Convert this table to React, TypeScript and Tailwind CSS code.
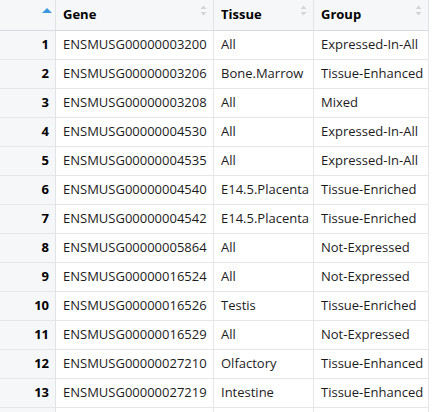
import React from "react";

const rows: [string, string, string][] = [
  ["ENSMUSG00000003200", "All", "Expressed-In-All"],
  ["ENSMUSG00000003206", "Bone.Marrow", "Tissue-Enhanced"],
  ["ENSMUSG00000003208", "All", "Mixed"],
  ["ENSMUSG00000004530", "All", "Expressed-In-All"],
  ["ENSMUSG00000004535", "All", "Expressed-In-All"],
  ["ENSMUSG00000004540", "E14.5.Placenta", "Tissue-Enriched"],
  ["ENSMUSG00000004542", "E14.5.Placenta", "Tissue-Enriched"],
  ["ENSMUSG00000005864", "All", "Not-Expressed"],
  ["ENSMUSG00000016524", "All", "Not-Expressed"],
  ["ENSMUSG00000016526", "Testis", "Tissue-Enriched"],
  ["ENSMUSG00000016529", "All", "Not-Expressed"],
  ["ENSMUSG00000027210", "Olfactory", "Tissue-Enhanced"],
  ["ENSMUSG00000027219", "Intestine", "Tissue-Enhanced"],
];

function SortIcon() {
  return (
    <svg width="7" height="11" viewBox="0 0 7 11" className="absolute right-[6px] top-[5px]">
      <path d="M3.5 0.5 L6.5 4 L0.5 4 Z" fill="#d3d5d8" />
      <path d="M0.5 7 L6.5 7 L3.5 10.5 Z" fill="#d3d5d8" />
    </svg>
  );
}

const grid = "grid grid-cols-[56px_158px_100px_115px] w-[429px]";

export default function App() {
  return (
    <div
      className="w-[437px] h-[412px] overflow-hidden bg-white text-[13px] text-[#1c1c1c]"
      style={{ fontFamily: '"Open Sans", "Noto Sans", sans-serif' }}
    >
      <div className={`${grid} h-[31px] bg-[#f6f7f9] border-b border-[#d8dbdf] font-bold text-black`}>
        <div className="relative border-r border-[#e1e4e7]">
          <svg width="10" height="5" viewBox="0 0 10 5" className="absolute left-[42px] top-[8px]">
            <path d="M5 0 L10 5 L0 5 Z" fill="#3b99e0" />
          </svg>
        </div>
        <div className="relative border-r border-[#e1e4e7] pl-[7px] flex items-center">
          Gene
          <SortIcon />
        </div>
        <div className="relative border-r border-[#e1e4e7] pl-[7px] flex items-center">
          Tissue
          <SortIcon />
        </div>
        <div className="relative border-r border-[#e1e4e7] pl-[7px] flex items-center">
          Group
          <SortIcon />
        </div>
      </div>
      {rows.map((r, i) => (
        <div key={i} className={`${grid} h-[29px] border-b border-[#e4e6e9]`}>
          <div className="bg-[#f6f7f9] border-r border-[#e1e4e7] flex items-center justify-end pr-[6px] font-bold text-black">
            {i + 1}
          </div>
          <div className="border-r border-[#e4e6e9] pl-[7px] flex items-center whitespace-nowrap">{r[0]}</div>
          <div className="border-r border-[#e4e6e9] pl-[7px] flex items-center whitespace-nowrap">{r[1]}</div>
          <div className="border-r border-[#e4e6e9] pl-[7px] flex items-center whitespace-nowrap">{r[2]}</div>
        </div>
      ))}
      <div className={`${grid} h-[29px]`}>
        <div className="bg-[#f6f7f9] border-r border-[#e1e4e7]" />
        <div className="border-r border-[#e4e6e9]" />
        <div className="border-r border-[#e4e6e9]" />
        <div className="border-r border-[#e4e6e9]" />
      </div>
    </div>
  );
}
